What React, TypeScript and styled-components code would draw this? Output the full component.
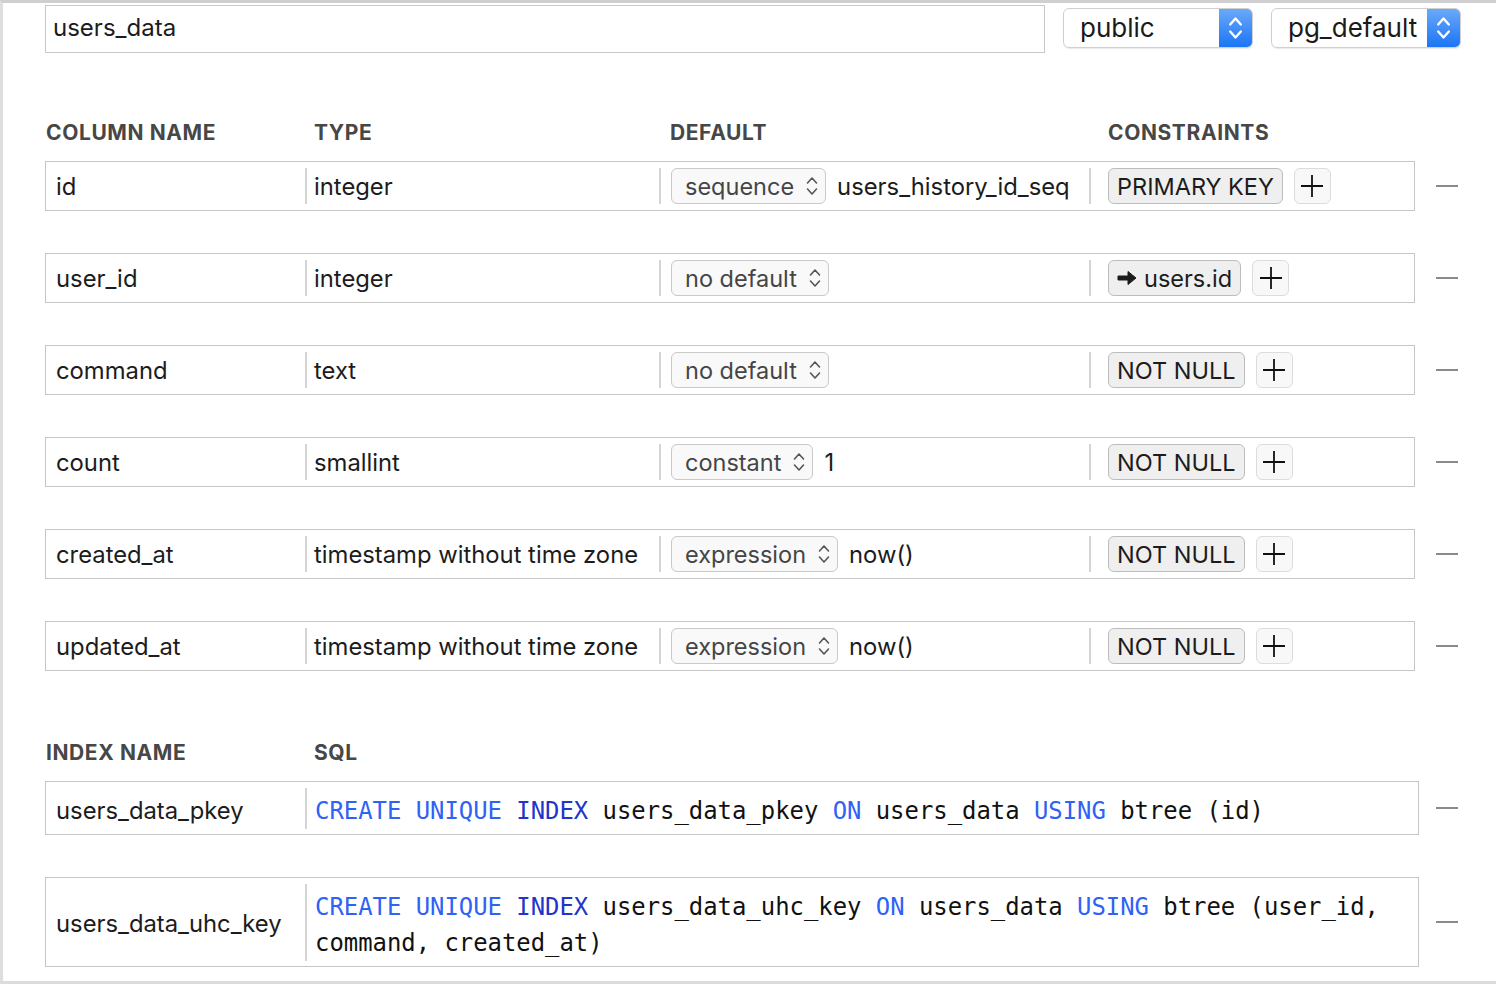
import styled, { createGlobalStyle } from "styled-components";

const GlobalStyle = createGlobalStyle`
  html, body {
    margin: 0;
    padding: 0;
    background: #ffffff;
  }
  body {
    font-family: Inter, "Noto Sans", sans-serif;
    color: #1c1c1c;
  }
  * {
    box-sizing: border-box;
  }
`;

const Frame = styled.div`
  width: 1496px;
  height: 984px;
  border-top: 3px solid #cfcfcf;
  border-left: 3px solid #dedede;
  border-bottom: 3px solid #dcdcdc;
  padding: 2px 0 0 42px;
  overflow: hidden;
`;

const TopBar = styled.div`
  display: flex;
  align-items: flex-start;
  gap: 18px;
`;

const NameInput = styled.div`
  width: 1000px;
  height: 48px;
  border: 1px solid #c9c9c9;
  display: flex;
  align-items: center;
  padding: 0 0 3px 7px;
  font-size: 24px;
`;

const PopUp = styled.div`
  margin-top: 3px;
  width: 190px;
  height: 40px;
  border-radius: 6px;
  border: 1px solid #d0d0d0;
  box-shadow: 0 1px 1px rgba(0, 0, 0, 0.08);
  display: flex;
  align-items: stretch;
  overflow: hidden;
  font-size: 26px;
`;

const PopUpLabel = styled.div`
  flex: 1;
  display: flex;
  align-items: center;
  padding: 0 0 2px 16px;
  color: #1a1a1a;
`;

const PopUpStepper = styled.div`
  width: 33px;
  background: linear-gradient(#6aa9f9, #1b75f6);
  display: flex;
  align-items: center;
  justify-content: center;
`;

const SectionHeader = styled.div<{ $top: number }>`
  display: grid;
  grid-template-columns: 268px 356px 438px 1fr;
  margin-top: ${(p) => p.$top}px;
  height: 24px;
  align-items: center;
  padding-left: 1px;
  font-size: 21px;
  font-weight: 700;
  color: #474747;
  letter-spacing: 0.6px;
`;

const RowList = styled.div<{ $top: number; $gap: number }>`
  display: flex;
  flex-direction: column;
  gap: ${(p) => p.$gap}px;
  margin-top: ${(p) => p.$top}px;
`;

const RowLine = styled.div`
  width: 1413px;
  display: flex;
  align-items: center;
  justify-content: space-between;
`;

const ColumnBox = styled.div`
  width: 1370px;
  height: 50px;
  border: 1px solid #c6c6c6;
  display: grid;
  grid-template-columns: 259px 354px 430px 1fr;
`;

const IndexBox = styled.div<{ $height: number }>`
  width: 1374px;
  height: ${(p) => p.$height}px;
  border: 1px solid #c6c6c6;
  display: grid;
  grid-template-columns: 259px 1fr;
`;

const Cell = styled.div<{ $pad: number; $first?: boolean; $drop?: number }>`
  display: flex;
  align-items: center;
  gap: 11px;
  margin: 6px 0;
  padding-left: ${(p) => p.$pad}px;
  padding-top: ${(p) => p.$drop ?? 0}px;
  border-left: ${(p) => (p.$first ? "none" : "2px solid #d4d4d4")};
  font-size: 23.8px;
  color: #1c1c1c;
  white-space: nowrap;
`;

const SelectButton = styled.div`
  height: 36px;
  border: 1px solid #c9c9c9;
  border-radius: 6px;
  background: #f9f9f9;
  display: flex;
  align-items: center;
  gap: 12px;
  padding: 0 7px 0 13px;
  color: #454545;
  font-size: 23.5px;
`;

const Tag = styled.div`
  height: 36px;
  border: 1px solid #bdbdbd;
  border-radius: 6px;
  background: #efefef;
  display: flex;
  align-items: center;
  gap: 7px;
  padding: 0 8px;
  color: #1c1c1c;
  font-size: 23.5px;
`;

const PlusButton = styled.div`
  width: 37px;
  height: 36px;
  border: 1px solid #dcdcdc;
  border-radius: 6px;
  background: #f8f8f8;
  display: flex;
  align-items: center;
  justify-content: center;
`;

const MinusButton = styled.div`
  width: 22px;
  height: 2px;
  background: #8a8a8a;
`;

const SqlCell = styled.div`
  margin: 6px 0;
  padding: 5px 30px 0 8px;
  border-left: 2px solid #d4d4d4;
  display: flex;
  align-items: center;
  font-family: "DejaVu Sans Mono", "Liberation Mono", monospace;
  font-size: 23.9px;
  line-height: 36px;
  color: #111;
`;

const SqlText = styled.div`
  display: flex;
  flex-wrap: wrap;
  column-gap: 0.6em;
`;

const Keyword = styled.span<{ $dark?: boolean }>`
  color: ${(p) => (p.$dark ? "#2135c8" : "#2f62f5")};
`;

const Chevrons = ({ color = "#555", w = 12, h = 22, sw = 1.6 }) => (
  <svg width={w} height={h} viewBox="0 0 12 22">
    <path d="M1.5 8 L6 3 L10.5 8" fill="none" stroke={color} strokeWidth={sw} strokeLinecap="round" strokeLinejoin="round" />
    <path d="M1.5 14 L6 19 L10.5 14" fill="none" stroke={color} strokeWidth={sw} strokeLinecap="round" strokeLinejoin="round" />
  </svg>
);

const Plus = () => (
  <svg width="24" height="24" viewBox="0 0 24 24">
    <path d="M12 1 V23 M1 12 H23" stroke="#111" strokeWidth="1.8" />
  </svg>
);

const Arrow = () => (
  <svg width="20" height="16" viewBox="0 0 20 16">
    <path d="M1 6 H11 V1.5 L19 8 L11 14.5 V10 H1 Z" fill="#1c1c1c" stroke="#1c1c1c" strokeWidth="1" strokeLinejoin="round" />
  </svg>
);

type Column = {
  name: string;
  type: string;
  defaultKind: string;
  defaultValue?: string;
  constraint: string;
  reference?: boolean;
};

const columns: Column[] = [
  { name: "id", type: "integer", defaultKind: "sequence", defaultValue: "users_history_id_seq", constraint: "PRIMARY KEY" },
  { name: "user_id", type: "integer", defaultKind: "no default", constraint: "users.id", reference: true },
  { name: "command", type: "text", defaultKind: "no default", constraint: "NOT NULL" },
  { name: "count", type: "smallint", defaultKind: "constant", defaultValue: "1", constraint: "NOT NULL" },
  { name: "created_at", type: "timestamp without time zone", defaultKind: "expression", defaultValue: "now()", constraint: "NOT NULL" },
  { name: "updated_at", type: "timestamp without time zone", defaultKind: "expression", defaultValue: "now()", constraint: "NOT NULL" },
];

const keywords: Record<string, "light" | "dark"> = {
  CREATE: "light",
  UNIQUE: "light",
  INDEX: "dark",
  ON: "light",
  USING: "light",
};

// each word is its own flex item so wrapped lines break cleanly
const Sql = ({ name, cols }: { name: string; cols: string[] }) => {
  const words = ["CREATE", "UNIQUE", "INDEX", name, "ON", "users_data", "USING", "btree"];
  const colWords = cols.map((c, i) => (i === 0 ? "(" : "") + c + (i === cols.length - 1 ? ")" : ","));
  return (
    <SqlText>
      {[...words, ...colWords].map((w, i) =>
        keywords[w] ? (
          <Keyword key={i} $dark={keywords[w] === "dark"}>
            {w}
          </Keyword>
        ) : (
          <span key={i}>{w}</span>
        )
      )}
    </SqlText>
  );
};

export default function App() {
  return (
    <>
      <GlobalStyle />
      <Frame>
        <TopBar>
          <NameInput>users_data</NameInput>
          <PopUp>
            <PopUpLabel>public</PopUpLabel>
            <PopUpStepper>
              <Chevrons color="#fff" w={15} h={26} sw={2} />
            </PopUpStepper>
          </PopUp>
          <PopUp>
            <PopUpLabel>pg_default</PopUpLabel>
            <PopUpStepper>
              <Chevrons color="#fff" w={15} h={26} sw={2} />
            </PopUpStepper>
          </PopUp>
        </TopBar>

        <SectionHeader $top={67}>
          <span>COLUMN NAME</span>
          <span>TYPE</span>
          <span>DEFAULT</span>
          <span>CONSTRAINTS</span>
        </SectionHeader>

        <RowList $top={17} $gap={42}>
          {columns.map((c) => (
            <RowLine key={c.name}>
              <ColumnBox>
                <Cell $pad={10} $first>{c.name}</Cell>
                <Cell $pad={7}>{c.type}</Cell>
                <Cell $pad={10}>
                  <SelectButton>
                    {c.defaultKind}
                    <Chevrons />
                  </SelectButton>
                  {c.defaultValue}
                </Cell>
                <Cell $pad={17}>
                  <Tag>
                    {c.reference && <Arrow />}
                    {c.constraint}
                  </Tag>
                  <PlusButton>
                    <Plus />
                  </PlusButton>
                </Cell>
              </ColumnBox>
              <MinusButton />
            </RowLine>
          ))}
        </RowList>

        <SectionHeader $top={69}>
          <span>INDEX NAME</span>
          <span>SQL</span>
        </SectionHeader>

        <RowList $top={17} $gap={42}>
          <RowLine>
            <IndexBox $height={54}>
              <Cell $pad={10} $first $drop={3}>users_data_pkey</Cell>
              <SqlCell>
                <Sql name="users_data_pkey" cols={["id"]} />
              </SqlCell>
            </IndexBox>
            <MinusButton />
          </RowLine>
          <RowLine>
            <IndexBox $height={90}>
              <Cell $pad={10} $first $drop={1}>users_data_uhc_key</Cell>
              <SqlCell>
                <Sql name="users_data_uhc_key" cols={["user_id", "command", "created_at"]} />
              </SqlCell>
            </IndexBox>
            <MinusButton />
          </RowLine>
        </RowList>
      </Frame>
    </>
  );
}
